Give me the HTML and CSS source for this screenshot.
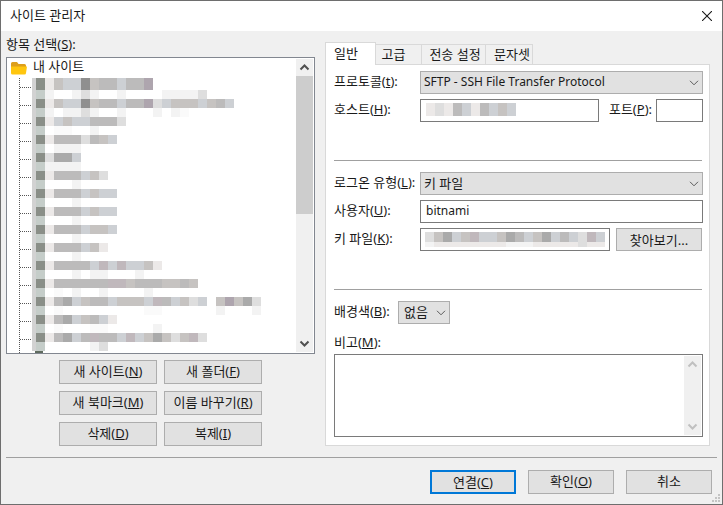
FILE: index.html
```html
<!DOCTYPE html>
<html lang="ko">
<head>
<meta charset="utf-8">
<title>사이트 관리자</title>
<link rel="stylesheet" href="styles.css">
</head>
<body>
<div class="window">
  <header class="titlebar">
    <span class="title">사이트 관리자</span>
    <svg class="close" width="10" height="10" viewBox="0 0 10 10"><path d="M0 0L10 10M10 0L0 10" stroke="#1a1a1a" stroke-width="1.1" fill="none"/></svg>
  </header>
  <main class="main">
    <section class="left">
      <div class="tree-label">항목 선택(<u>S</u>):</div>
      <div class="tree">
        <div class="tree-list">
          <div class="root">
            <svg width="16" height="14" viewBox="0 0 16 14"><path d="M0 2.5Q0 1 1.5 1H6L7.5 3H13.5Q15 3 15 4.5V6H0Z" fill="#dd9f1c"/><path d="M0 5.5H16L15 12Q15 13.5 13.5 13.5H1.5Q0 13.5 0 12Z" fill="#ffc60f"/></svg>
            <span>내 사이트</span>
          </div>
          <div class="branches">
            <div class="entry first"><div class="mosaic tall"><i class="k"></i><i class="m"></i><i class="a"></i><i class="b"></i><i class="c"></i><i class="c"></i><i class="e"></i><i class="b"></i><i class="d"></i><i class="d"></i><i class="c"></i><i class="d"></i><i class="d"></i><i class="f"></i></div><div class="mosaic"><i class="k"></i><i class="n"></i><i class="h"></i><i class="w"></i><i class="w"></i><i class="h"></i><i class="g"></i><i class="h"></i><i class="w"></i><i class="w"></i><i class="h"></i><i class="w"></i><i class="w"></i><i class="w"></i><i class="w"></i><i class="h"></i><i class="h"></i><i class="h"></i><i class="h"></i><i class="g"></i></div></div>
            <div class="entry"><div class="mosaic"><i class="k"></i><i class="m"></i><i class="a"></i><i class="b"></i><i class="c"></i><i class="c"></i><i class="e"></i><i class="b"></i><i class="d"></i><i class="d"></i><i class="c"></i><i class="d"></i><i class="d"></i><i class="f"></i><i class="g"></i><i class="c"></i><i class="b"></i><i class="b"></i><i class="b"></i><i class="c"></i><i class="b"></i><i class="d"></i><i class="c"></i></div><div class="mosaic"><i class="k"></i><i class="n"></i><i class="h"></i><i class="w"></i><i class="h"></i><i class="h"></i><i class="g"></i><i class="h"></i><i class="w"></i><i class="w"></i><i class="h"></i><i class="w"></i><i class="w"></i><i class="w"></i><i class="h"></i><i class="w"></i><i class="h"></i><i class="i"></i></div></div>
            <div class="entry"><div class="mosaic"><i class="k"></i><i class="m"></i><i class="a"></i><i class="c"></i><i class="b"></i><i class="c"></i><i class="c"></i><i class="d"></i><i class="d"></i><i class="d"></i><i class="g"></i></div><div class="mosaic"><i class="k"></i><i class="n"></i><i class="w"></i><i class="i"></i><i class="i"></i><i class="w"></i><i class="w"></i><i class="h"></i><i class="w"></i></div></div>
            <div class="entry"><div class="mosaic"><i class="k"></i><i class="m"></i><i class="a"></i><i class="d"></i><i class="d"></i><i class="d"></i><i class="g"></i><i class="d"></i><i class="b"></i><i class="c"></i></div><div class="mosaic"><i class="k"></i><i class="n"></i><i class="w"></i><i class="h"></i><i class="h"></i><i class="h"></i></div></div>
            <div class="entry"><div class="mosaic"><i class="k"></i><i class="m"></i><i class="g"></i><i class="l"></i><i class="l"></i><i class="c"></i></div><div class="mosaic"><i class="k"></i><i class="n"></i><i class="h"></i><i class="h"></i><i class="h"></i><i class="h"></i></div></div>
            <div class="entry"><div class="mosaic"><i class="k"></i><i class="m"></i><i class="a"></i><i class="d"></i><i class="d"></i><i class="d"></i><i class="c"></i><i class="b"></i><i class="g"></i></div><div class="mosaic"><i class="k"></i><i class="n"></i><i class="w"></i><i class="w"></i><i class="w"></i><i class="h"></i></div></div>
            <div class="entry"><div class="mosaic"><i class="k"></i><i class="m"></i><i class="a"></i><i class="d"></i><i class="d"></i><i class="d"></i><i class="c"></i><i class="b"></i><i class="c"></i><i class="c"></i></div><div class="mosaic"><i class="k"></i><i class="n"></i><i class="w"></i><i class="w"></i><i class="w"></i><i class="h"></i></div></div>
            <div class="entry"><div class="mosaic"><i class="k"></i><i class="m"></i><i class="a"></i><i class="d"></i><i class="d"></i><i class="d"></i><i class="c"></i><i class="b"></i><i class="c"></i><i class="c"></i></div><div class="mosaic"><i class="k"></i><i class="n"></i><i class="w"></i><i class="w"></i><i class="w"></i><i class="h"></i></div></div>
            <div class="entry"><div class="mosaic"><i class="k"></i><i class="m"></i><i class="a"></i><i class="d"></i><i class="d"></i><i class="d"></i><i class="c"></i><i class="b"></i><i class="b"></i><i class="c"></i></div><div class="mosaic"><i class="k"></i><i class="n"></i><i class="w"></i><i class="w"></i><i class="w"></i><i class="h"></i></div></div>
            <div class="entry"><div class="mosaic"><i class="k"></i><i class="m"></i><i class="a"></i><i class="d"></i><i class="d"></i><i class="d"></i><i class="c"></i><i class="b"></i><i class="a"></i></div><div class="mosaic"><i class="k"></i><i class="n"></i><i class="w"></i><i class="w"></i><i class="w"></i><i class="h"></i></div></div>
            <div class="entry"><div class="mosaic"><i class="k"></i><i class="m"></i><i class="a"></i><i class="d"></i><i class="d"></i><i class="d"></i><i class="d"></i><i class="c"></i><i class="o"></i><i class="c"></i><i class="o"></i><i class="c"></i><i class="c"></i><i class="b"></i><i class="a"></i></div><div class="mosaic"><i class="k"></i><i class="n"></i><i class="w"></i><i class="w"></i><i class="w"></i><i class="h"></i><i class="w"></i><i class="h"></i><i class="h"></i><i class="w"></i><i class="w"></i><i class="w"></i><i class="h"></i></div></div>
            <div class="entry"><div class="mosaic"><i class="k"></i><i class="m"></i><i class="a"></i><i class="d"></i><i class="d"></i><i class="d"></i><i class="d"></i><i class="d"></i><i class="d"></i><i class="o"></i><i class="o"></i><i class="b"></i><i class="d"></i><i class="d"></i><i class="d"></i><i class="b"></i><i class="b"></i><i class="d"></i><i class="b"></i></div><div class="mosaic"><i class="k"></i><i class="n"></i><i class="w"></i><i class="i"></i><i class="w"></i><i class="h"></i><i class="w"></i><i class="w"></i><i class="h"></i><i class="w"></i><i class="w"></i><i class="w"></i><i class="w"></i><i class="h"></i></div></div>
            <div class="entry"><div class="mosaic"><i class="k"></i><i class="m"></i><i class="a"></i><i class="d"></i><i class="l"></i><i class="c"></i><i class="b"></i><i class="d"></i><i class="d"></i><i class="c"></i><i class="b"></i><i class="b"></i><i class="b"></i><i class="c"></i><i class="o"></i><i class="d"></i><i class="c"></i><i class="b"></i><i class="g"></i><i class="c"></i><i class="w"></i><i class="b"></i><i class="f"></i><i class="b"></i><i class="l"></i><i class="g"></i></div><div class="mosaic"><i class="k"></i><i class="n"></i><i class="w"></i><i class="i"></i><i class="w"></i><i class="w"></i><i class="w"></i><i class="w"></i><i class="w"></i><i class="w"></i><i class="w"></i><i class="w"></i><i class="w"></i><i class="i"></i><i class="i"></i><i class="w"></i><i class="w"></i><i class="w"></i><i class="w"></i><i class="w"></i><i class="w"></i><i class="h"></i><i class="w"></i><i class="w"></i><i class="w"></i><i class="h"></i></div></div>
            <div class="entry"><div class="mosaic"><i class="k"></i><i class="m"></i><i class="a"></i><i class="d"></i><i class="l"></i><i class="c"></i><i class="b"></i><i class="d"></i><i class="c"></i><i class="a"></i></div><div class="mosaic"><i class="k"></i><i class="n"></i><i class="w"></i><i class="i"></i><i class="w"></i><i class="w"></i><i class="w"></i><i class="i"></i><i class="i"></i><i class="w"></i><i class="w"></i><i class="w"></i><i class="w"></i><i class="w"></i><i class="h"></i></div></div>
            <div class="entry"><div class="mosaic"><i class="k"></i><i class="m"></i><i class="a"></i><i class="d"></i><i class="l"></i><i class="c"></i><i class="d"></i><i class="o"></i><i class="d"></i><i class="d"></i><i class="c"></i><i class="o"></i><i class="c"></i><i class="b"></i><i class="l"></i><i class="b"></i><i class="g"></i><i class="b"></i><i class="o"></i><i class="g"></i></div><div class="mosaic"><i class="k"></i><i class="n"></i><i class="w"></i><i class="w"></i><i class="w"></i><i class="w"></i><i class="w"></i><i class="h"></i><i class="g"></i></div></div>
            <div class="entry peek"><svg width="8" height="6" viewBox="0 0 8 6"><rect width="8" height="6" fill="#5f6b5f"/><rect x="1" y="2" width="6" height="4" fill="#3f9a3f"/></svg></div>
          </div>
        </div>
        <div class="scrollbar">
          <svg class="arrow" width="17" height="17" viewBox="0 0 17 17"><path d="M4.5 10.5L8.500 6.500L12.500 10.500" stroke="#505050" stroke-width="2" fill="none"/></svg>
          <div class="track"><div class="thumb"></div></div>
          <svg class="arrow" width="17" height="17" viewBox="0 0 17 17"><path d="M4.500 6.500L8.500 10.500L12.500 6.500" stroke="#505050" stroke-width="2" fill="none"/></svg>
        </div>
      </div>
      <div class="actions">
        <button class="btn">새 사이트(<u>N</u>)</button>
        <button class="btn">새 폴더(<u>F</u>)</button>
        <button class="btn">새 북마크(<u>M</u>)</button>
        <button class="btn">이름 바꾸기(<u>R</u>)</button>
        <button class="btn">삭제(<u>D</u>)</button>
        <button class="btn">복제(<u>I</u>)</button>
      </div>
    </section>
    <section class="right">
      <nav class="tabs">
        <div class="tab active">일반</div>
        <div class="tab t2">고급</div>
        <div class="tab t3">전송 설정</div>
        <div class="tab t4">문자셋</div>
      </nav>
      <div class="panel">
        <div class="row">
          <label class="lbl">프로토콜(<u>t</u>):</label>
          <div class="select grow"><span class="latin">SFTP - SSH File Transfer Protocol</span><svg width="10" height="6" viewBox="0 0 10 6"><path d="M1 .8L5 4.800L9 .8" stroke="#5a5a5a" fill="none"/></svg></div>
        </div>
        <div class="row">
          <label class="lbl">호스트(<u>H</u>):</label>
          <div class="field host"><div class="mosaic blur"><i class="a"></i><i class="g"></i><i class="a"></i><i class="d"></i><i class="c"></i><i class="a"></i><i class="d"></i><i class="c"></i><i class="b"></i><i class="c"></i></div></div>
          <label class="lbl port-lbl">포트(<u>P</u>):</label>
          <div class="field port"></div>
        </div>
        <hr class="sep sep-a">
        <div class="row">
          <label class="lbl">로그온 유형(<u>L</u>):</label>
          <div class="select grow"><span>키 파일</span><svg width="10" height="6" viewBox="0 0 10 6"><path d="M1 .8L5 4.800L9 .8" stroke="#5a5a5a" fill="none"/></svg></div>
        </div>
        <div class="row">
          <label class="lbl">사용자(<u>U</u>):</label>
          <div class="field grow latin">bitnami</div>
        </div>
        <div class="row">
          <label class="lbl">키 파일(<u>K</u>):</label>
          <div class="field key">
            <div class="mosaic keytop"><i class="g"></i><i class="b"></i><i class="l"></i><i class="c"></i><i class="b"></i><i class="o"></i><i class="c"></i><i class="c"></i><i class="b"></i><i class="l"></i><i class="d"></i><i class="c"></i><i class="b"></i><i class="l"></i><i class="c"></i><i class="d"></i><i class="c"></i><i class="g"></i><i class="o"></i><i class="c"></i></div>
            <div class="mosaic keybot"><i class="h"></i><i class="a"></i><i class="a"></i><i class="a"></i><i class="a"></i><i class="a"></i><i class="a"></i><i class="a"></i><i class="a"></i><i class="h"></i><i class="h"></i><i class="h"></i><i class="a"></i><i class="a"></i><i class="a"></i><i class="a"></i><i class="a"></i><i class="g"></i><i class="a"></i><i class="a"></i></div>
          </div>
          <button class="btn browse">찾아보기...</button>
        </div>
        <hr class="sep sep-b">
        <div class="row">
          <label class="lbl lbl-bg">배경색(<u>B</u>):</label>
          <div class="select color"><span>없음</span><svg width="10" height="6" viewBox="0 0 10 6"><path d="M1 .8L5 4.800L9 .8" stroke="#5a5a5a" fill="none"/></svg></div>
        </div>
        <label class="lbl memo-lbl">비고(<u>M</u>):</label>
        <div class="memo">
          <div class="memo-bar">
            <svg width="17" height="17" viewBox="0 0 17 17"><path d="M4.500 10.500L8.500 6.500L12.500 10.500" stroke="#c0c0c0" stroke-width="2" fill="none"/></svg>
            <svg width="17" height="17" viewBox="0 0 17 17"><path d="M4.500 6.500L8.500 10.500L12.500 6.500" stroke="#c0c0c0" stroke-width="2" fill="none"/></svg>
          </div>
        </div>
      </div>
    </section>
  </main>
  <hr class="footer-sep">
  <footer class="footer">
    <button class="btn wide primary">연결(<u>C</u>)</button>
    <button class="btn wide">확인(<u>O</u>)</button>
    <button class="btn wide">취소</button>
  </footer>
  <svg class="grip" width="8" height="8" viewBox="0 0 8 8"><path d="M6 0h2v2H6zM3 3h2v2H3zM6 3h2v2H6zM0 6h2v2H0zM3 6h2v2H3zM6 6h2v2H6z" fill="#c4c4c4"/></svg>
</div>
</body>
</html>
```

FILE: styles.css
```css
* { box-sizing: border-box; }
html, body { margin: 0; padding: 0; }
body {
  width: 723px;
  height: 505px;
  overflow: hidden;
  font-family: "Noto Sans", "Noto Sans CJK KR", sans-serif;
  font-size: 12px;
  color: #1a1a1a;
}
u { text-underline-offset: 1px; }
.window {
  position: relative;
  width: 723px;
  height: 505px;
  border: 1px solid #6e6e6e;
  background: #f0f0f0;
  display: flex;
  flex-direction: column;
}
.titlebar {
  height: 30px;
  flex: none;
  background: #fff;
  display: flex;
  align-items: center;
  justify-content: space-between;
  padding: 0 10px 1px 9px;
}
.title { font-size: 13px; padding-bottom: 2px; }
.main {
  display: flex;
  height: 415px;
  flex: none;
  padding-left: 5px;
}
.left { width: 309px; flex: none; display: flex; flex-direction: column; }
.tree-label { height: 26px; flex: none; padding-top: 4px; font-size: 13px; line-height: 18px; }
.tree {
  height: 297px;
  flex: none;
  border: 1px solid #828790;
  background: #fff;
  display: flex;
  overflow: hidden;
}
.tree-list { flex: 1; min-width: 0; overflow: hidden; }
.root { height: 20px; display: flex; align-items: flex-start; gap: 6px; padding-left: 4px; font-size: 13px; line-height: 16px; }
.root svg { margin-top: 3px; flex: none; }
.branches { margin-left: 12px; border-left: 1px dotted #555; }
.entry { height: 18px; padding-left: 12px; position: relative; }
.entry::before {
  content: "";
  position: absolute;
  left: 0;
  top: 6px;
  width: 11px;
  border-top: 1px dotted #555;
}
.entry.first { height: 21px; }
.entry.first::before { top: 9px; }
.entry.peek { padding: 0 0 0 15px; }
.entry.peek::before { display: none; }
.entry.peek svg { display: block; }
.mosaic { display: flex; height: 9px; }
.mosaic.tall { height: 12px; }
.mosaic i { width: 9px; flex: none; display: block; }
.mosaic i.k { width: 4px; background: #d2d2d2; }
.mosaic i.m { background: #8a8f88; }
.mosaic i.n { background: #c5cdc9; }
.mosaic i.a { background: #ece9e8; }
.mosaic i.b { background: #c6c3c1; }
.mosaic i.c { background: #cdd0d4; }
.mosaic i.d { background: #bcbbbb; }
.mosaic i.e { background: #8f8f8f; }
.mosaic i.f { background: #aea5ae; }
.mosaic i.o { background: #c0b8bc; }
.mosaic i.g { background: #dedede; }
.mosaic i.l { background: #aaaaaa; }
.mosaic i.h { background: #f3f3f3; }
.mosaic i.i { background: #fafafa; }
.mosaic i.w { background: #fff; }
.scrollbar { width: 17px; flex: none; margin: 1px 1px 1px 0; background: #f0f0f0; display: flex; flex-direction: column; }
.scrollbar .arrow { flex: none; display: block; }
.track { flex: 1; }
.thumb { height: 138px; background: #cdcdcd; }
.actions {
  display: grid;
  grid-template-columns: 98px 98px;
  grid-auto-rows: 24px;
  gap: 7px;
  margin: 6px 0 0 53px;
}
.btn {
  font: inherit;
  font-size: 13px;
  color: #1a1a1a;
  background: #e1e1e1;
  border: 1px solid #adadad;
  padding: 0;
  margin: 0;
  line-height: 20px;
}
.actions .btn { padding-bottom: 2px; }
.right { margin-left: 10px; width: 385px; flex: none; padding-top: 11px; display: flex; flex-direction: column; }
.tabs { display: flex; height: 22px; flex: none; align-items: flex-end; position: relative; z-index: 1; }
.tab {
  height: 20px;
  border: 1px solid #d9d9d9;
  border-left: 0;
  border-bottom: 0;
  background: #f0f0f0;
  text-align: center;
  line-height: 19px;
  font-size: 13px;
}
.tab.active { height: 23px; margin-bottom: -1px; width: 51px; background: #fff; border-left: 1px solid #d9d9d9; padding-right: 9px; line-height: 21px; }
.t2 { width: 46px; padding-right: 10px; }
.t3 { width: 64px; padding-left: 3px; }
.t4 { width: 47px; padding-left: 6px; }
.panel {
  height: 382px;
  flex: none;
  background: #fff;
  border: 1px solid #d9d9d9;
  padding: 6px 6px 0 8px;
  display: flex;
  flex-direction: column;
}
.row { display: flex; align-items: center; height: 23px; flex: none; margin-bottom: 5px; }
.row:nth-of-type(2) { margin-bottom: 0; }
.lbl { width: 86px; flex: none; font-size: 13px; white-space: nowrap; padding-bottom: 4px; }
.grow { flex: 1; }
.select {
  height: 23px;
  background: #e1e1e1;
  border: 1px solid #adadad;
  display: flex;
  align-items: center;
  justify-content: space-between;
  padding: 0 3px 2px 3px;
  font-size: 13px;
}
.select svg { flex: none; margin-top: 2px; }
.field {
  height: 23px;
  border: 1px solid #7a7a7a;
  background: #fff;
  padding: 0 5px;
  line-height: 19px;
  font-size: 13px;
  overflow: hidden;
}
.select .latin { font-size: 12px; }
.field.latin { font-size: 12px; }
.host { width: 179px; }
.mosaic.blur { margin-top: 3px; height: 13px; }
.port-lbl { width: auto; margin-left: 10px; margin-right: 4px; }
.port { width: 47px; margin-left: auto; }
.key { width: 190px; padding: 3px 0 0 4px; }
.keytop { height: 10px; }
.keybot { height: 5px; }
.browse { width: 86px; height: 23px; margin-left: 6px; }
.sep { width: 368px; height: 1px; margin: 0; border: 0; background: #a0a0a0; flex: none; }
.sep-a { margin-top: 38px; margin-bottom: 11px; }
.sep-b { margin-top: 33px; margin-bottom: 11px; }
.lbl-bg { width: 64px; }
.color { width: 52px; padding: 0 3px 2px 5px; }
.memo-lbl { height: 18px; margin-top: 4px; margin-bottom: 3px; line-height: 18px; padding-bottom: 0; }
.memo {
  width: 369px;
  height: 83px;
  flex: none;
  border: 1px solid #7a7a7a;
  background: #fff;
  padding: 1px;
  display: flex;
  justify-content: flex-end;
}
.memo-bar { width: 17px; background: #f0f0f0; display: flex; flex-direction: column; justify-content: space-between; }
.memo-bar svg { display: block; }
.footer-sep { width: 711px; height: 1px; margin: 11px 0 0 5px; border: 0; background: #a0a0a0; flex: none; }
.footer { display: flex; justify-content: flex-end; gap: 12px; margin-top: 12px; padding-right: 10px; }
.wide { width: 86px; height: 24px; padding-bottom: 2px; }
.primary { border: 2px solid #0078d7; }
.grip { position: absolute; right: 2px; bottom: 2px; }
```
